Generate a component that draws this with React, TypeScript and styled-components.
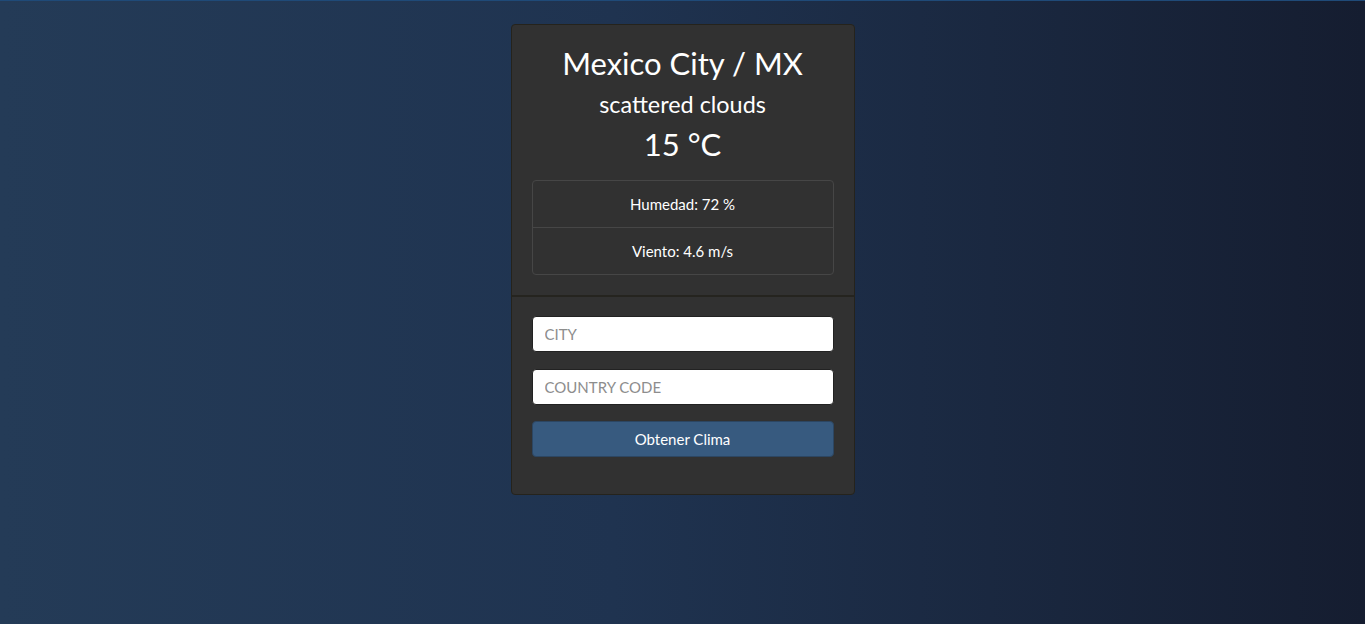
import styled, { createGlobalStyle } from "styled-components";

const GlobalStyle = createGlobalStyle`
  html, body {
    margin: 0;
    padding: 0;
    min-height: 100%;
  }
  body {
    font-family: "Lato", "Liberation Sans", sans-serif;
    font-size: 15px;
    color: #ffffff;
    background: linear-gradient(to right, #243b57 0%, #1f3350 45%, #151d30 100%);
    min-height: 100vh;
  }
`;

const Page = styled.main`
  display: flex;
  justify-content: center;
  align-items: flex-start;
  padding-top: 24px;
  min-height: 100vh;
  box-sizing: border-box;
  border-top: 1px solid #1f4a78;
`;

const Card = styled.div`
  width: 344px;
  box-sizing: border-box;
  margin-top: -1px;
  background: #313131;
  border: 1px solid #25231c;
  border-radius: 4px;
  display: flex;
  flex-direction: column;
`;

const Section = styled.section<{ $top?: number; $bottom?: number }>`
  padding: ${(p) => p.$top ?? 20}px 20px ${(p) => p.$bottom ?? 20}px;
  & + & {
    border-top: 2px solid #25241f;
  }
`;

const Heading = styled.h2<{ $size: number }>`
  margin: 0 0 8px;
  font-size: ${(p) => p.$size}px;
  font-weight: 400;
  line-height: 1.2;
  text-align: center;
`;

const List = styled.ul`
  list-style: none;
  margin: 17px 0 0;
  padding: 0;
  border: 1px solid #464646;
  border-radius: 4px;
`;

const Item = styled.li`
  padding: 12px 20px;
  line-height: 22px;
  text-align: center;
  & + & {
    border-top: 1px solid #464646;
  }
`;

const Form = styled.form`
  display: flex;
  flex-direction: column;
  gap: 16.5px;
`;

const Input = styled.input`
  height: 36px;
  box-sizing: border-box;
  padding: 0 12px;
  border: 1px solid #222;
  border-radius: 4px;
  background: #fff;
  font-family: inherit;
  font-size: 15px;
  color: #333;
  &::placeholder {
    color: #8d8d8d;
  }
`;

const Button = styled.button`
  height: 36px;
  border: 1px solid #2c4662;
  border-radius: 4px;
  background: #375a7f;
  color: #fff;
  font-family: inherit;
  font-size: 15px;
  cursor: pointer;
`;

export default function App() {
  return (
    <>
      <GlobalStyle />
      <Page>
        <Card>
          <Section>
            <Heading $size={31}>Mexico City / MX</Heading>
            <Heading $size={23.4}>scattered clouds</Heading>
            <Heading $size={31}>15 °C</Heading>
            <List>
              <Item>Humedad: 72 %</Item>
              <Item>Viento: 4.6 m/s</Item>
            </List>
          </Section>
          <Section $top={19} $bottom={37}>
            <Form onSubmit={(e) => e.preventDefault()}>
              <Input placeholder="CITY" />
              <Input placeholder="COUNTRY CODE" />
              <Button type="submit">Obtener Clima</Button>
            </Form>
          </Section>
        </Card>
      </Page>
    </>
  );
}
